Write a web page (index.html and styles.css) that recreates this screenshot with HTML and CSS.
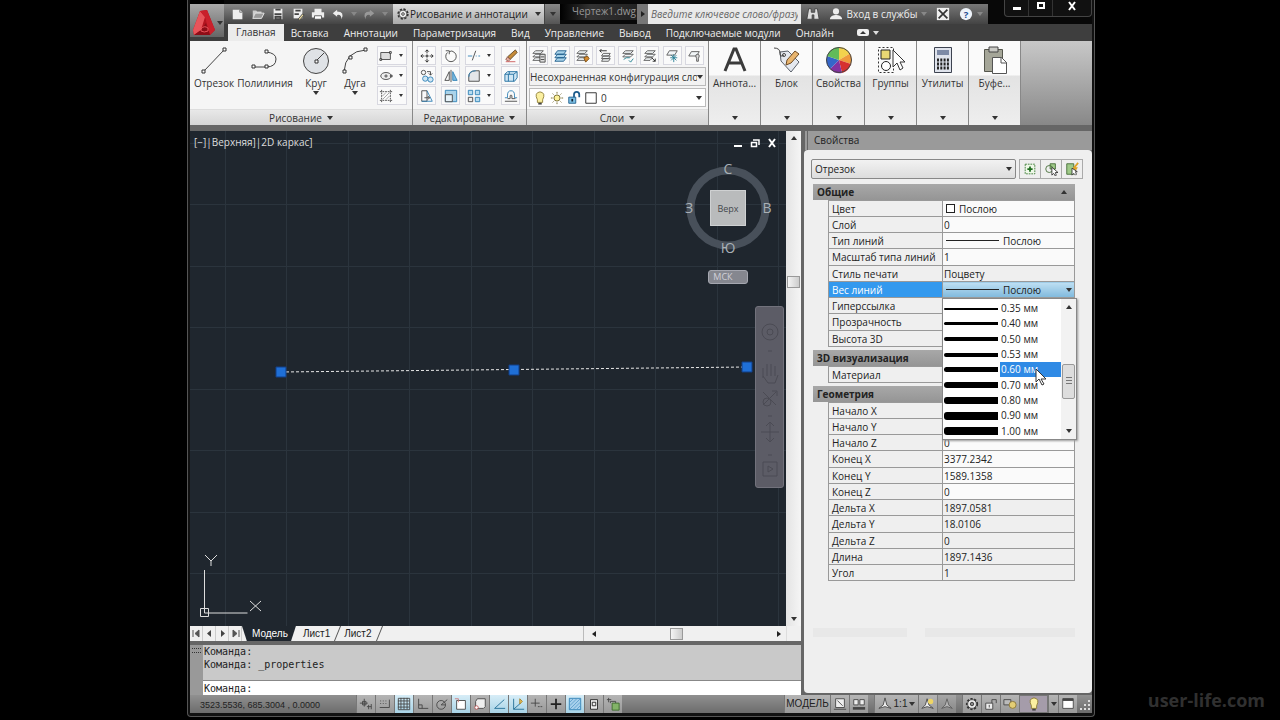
FILE: index.html
```html
<!DOCTYPE html>
<html lang="ru">

<head>
    <meta charset="UTF-8">
    <meta name="viewport" content="width=device-width, initial-scale=1.0">
    <title>Чертеж1.dwg</title>
    <link rel="stylesheet" href="styles.css">
</head>

<body>
    <div class="window">

        <header class="top">
            <button class="app-button" aria-label="Меню приложения">
                <svg width="24" height="28" viewBox="0 0 24 28">
                    <path d="M8 2L15 1L23 21L18 26L2 26L1 21Z" fill="#b3141f" />
                    <path d="M8 2L1 21L2 26L9 21L13 8Z" fill="#e8545a" />
                    <path d="M15 1L23 21L18 26L13 8L8 2Z" fill="#c9202b" />
                    <path d="M9 21L14 14L18 26L2 26Z" fill="#8d0d17" />
                    <path d="M9 20q3-4 7-1v3q-4 2-7 0z" fill="none" stroke="#e8545a" />
                </svg>
                <i class="arrow"></i>
            </button>
            <div class="top-rows">
                <div class="title-row">
                    <div class="quick">
                        <button aria-label="Создать"><svg class="ic" viewBox="0 0 16 16"><path d="M2 3h8l3 3v8H2z" fill="#eee" /><path d="M10 3v3h3" fill="none" stroke="#777" /></svg></button>
                        <button aria-label="Открыть"><svg class="ic" viewBox="0 0 16 16"><path d="M2 12V4h4l1 1h5v2H5z" fill="#ccc" /><path d="M5 7h10l-3 6H2z" fill="#999" stroke="#eee" /></svg></button>
                        <button aria-label="Сохранить"><svg class="ic" viewBox="0 0 16 16"><path d="M3 2h10v12H3z" fill="#eee" /><path d="M5 3h6M4 8h8M5 11h6v3H5z" stroke="#444" stroke-width="2" fill="#888" /></svg></button>
                        <button aria-label="Сохранить как"><svg class="ic" viewBox="0 0 16 16"><path d="M3 2h10v11H3z" fill="#eee" /><path d="M5 4h6M4 8h5" stroke="#444" stroke-width="2" /><path d="M8 14l5-6 2 1-5 6z" fill="#e8d9a0" stroke="#444" /></svg></button>
                        <button aria-label="Печать"><svg class="ic" viewBox="0 0 16 16"><path d="M4 2h8v4H4zM1 6h14v6H1z" fill="#eee" /><path d="M4 10h8v4H4z" fill="#fff" stroke="#555" /></svg></button>
                        <button aria-label="Отменить"><svg class="ic" viewBox="0 0 16 16"><path d="M7 3L2 7l5 4V9q5-1 5 5 4-9-5-9z" fill="#eee" /></svg></button>
                        <button class="thin" aria-label="Список отмены"><i class="arrow dim"></i></button>
                        <button aria-label="Повторить"><svg class="ic" viewBox="0 0 16 16"><path d="M9 3l5 4-5 4V9Q4 8 4 14 0 5 9 5z" fill="#999" /></svg></button>
                        <button class="thin" aria-label="Список повтора"><i class="arrow dim"></i></button>
                    </div>
                    <div class="workspace">
                        <svg class="ic" viewBox="0 0 16 16"><circle cx="8" cy="8" r="5.5" fill="none" stroke="#333" stroke-width="2" stroke-dasharray="2.5 1.8" /><circle cx="8" cy="8" r="4.5" fill="#eee" stroke="#444" /><circle cx="8" cy="8" r="1.5" fill="none" stroke="#333" /></svg>
                        <select aria-label="Рабочее пространство">
                            <option>Рисование и аннотации</option>
                        </select>
                        <i class="arrow"></i>
                    </div>
                    <button class="quick-more" aria-label="Настройка панели"><i class="arrow"></i></button>
                    <div class="doc-title">Чертеж1.dwg</div>
                    <button class="search-open" aria-label="Поиск"><i class="arrow-right"></i></button>
                    <input class="search" type="text" aria-label="Поиск" placeholder="Введите ключевое слово/фразу">
                    <div class="info">
                        <button aria-label="Найти"><svg class="ic" viewBox="0 0 16 16"><path d="M3 2h3v4h4V2h3l2 12H9V9H7v5H1z" fill="#ddd" stroke="#444" /></svg></button>
                        <button class="login"><svg class="ic" viewBox="0 0 16 16"><circle cx="8" cy="5" r="3.5" fill="#eee" /><path d="M1 14q0-4 6-5h2q6 1 6 5z" fill="#eee" /></svg>Вход в службы <i class="arrow dim"></i></button>
                        <button aria-label="Exchange"><svg class="ic" viewBox="0 0 16 16"><path d="M1 1h14v14H1z" fill="#eee" /><path d="M3 3l5 5 5-5M3 13l5-5 5 5" stroke="#333" stroke-width="2" fill="none" /></svg></button>
                        <button class="help" aria-label="Справка"><svg class="ic" viewBox="0 0 16 16"><circle cx="8" cy="8" r="7" fill="#eef3fa" /><text x="8" y="12" text-anchor="middle" font-size="11" font-weight="bold" fill="#1d4b8f">?</text></svg><i class="arrow dim"></i></button>
                    </div>
                    <div class="win-buttons">
                        <button aria-label="Свернуть"><svg width="10" height="10"><path d="M1 6h8v3H1z" fill="#fff" /></svg></button>
                        <button aria-label="Развернуть"><svg width="10" height="10"><path d="M2 2h6v5H2z" fill="none" stroke="#fff" stroke-width="2" /></svg></button>
                        <button class="close" aria-label="Закрыть"><svg width="10" height="10"><path d="M2 1l6 8M8 1L2 9" stroke="#fff" stroke-width="2" /></svg></button>
                    </div>
                </div>
                <nav class="tabs">
                    <a href="#" class="active">Главная</a>
                    <a href="#">Вставка</a>
                    <a href="#">Аннотации</a>
                    <a href="#">Параметризация</a>
                    <a href="#">Вид</a>
                    <a href="#">Управление</a>
                    <a href="#">Вывод</a>
                    <a href="#">Подключаемые модули</a>
                    <a href="#">Онлайн</a>
                    <button class="collapse" aria-label="Свернуть ленту"><svg width="12" height="7"><rect width="12" height="7" rx="2" fill="#eee" /><path d="M3 5h6L6 2z" fill="#333" /></svg><i class="arrow light"></i></button>
                </nav>
            </div>
        </header>

        <section class="ribbon">
            <div class="panel draw">
                <div class="panel-body">
                    <button class="big"><svg width="30" height="30" viewBox="0 0 30 30" class="ln"><path d="M5 25L25 4" /><path d="M3 24h3v3H3zM24 2h3v3h-3z" class="node" /></svg>Отрезок</button>
                    <button class="big wide"><svg width="30" height="30" viewBox="0 0 30 30" class="ln"><path d="M3 21h13q10 0 10-8 0-6-10-7" /><path d="M2 19h3v3H2zM15 19h3v3h-3zM15 4h3v3h-3z" class="node" /></svg>Полилиния</button>
                    <button class="big"><svg width="30" height="30" viewBox="0 0 30 30" class="ln"><circle cx="15" cy="15" r="12.5" fill="#dfe2e6" /><path d="M15 15l8-8" /><path d="M14 14h3v3h-3z" class="node" /></svg>Круг<i class="arrow"></i></button>
                    <button class="big slim"><svg width="30" height="30" viewBox="0 0 30 30" class="ln"><path d="M4 26Q5 5 26 4" /><path d="M3 24h3v3H3zM9 10h3v3H9zM24 2h3v3h-3z" class="node" /></svg>Дуга<i class="arrow"></i></button>
                    <div class="tools one">
                        <button class="tool split" aria-label="Прямоугольник"><svg class="ic ln" viewBox="0 0 16 16"><path d="M2 4h11v8H2z" fill="#ddd" /><path d="M1 11h2v2H1zM12 3h2v2h-2z" class="node" /></svg><i class="arrow"></i></button>
                        <button class="tool split" aria-label="Эллипс"><svg class="ic ln" viewBox="0 0 16 16"><ellipse cx="8" cy="8" rx="6" ry="4" fill="#eee" /><path d="M8 6v4M6 8h4M13 7h2v2h-2z" /></svg><i class="arrow"></i></button>
                        <button class="tool split" aria-label="Штриховка"><svg class="ic ln" viewBox="0 0 16 16"><path d="M3 1v14M13 1v14M1 3h14M1 13h14" stroke-dasharray="2 1" /><path d="M4 8l4-4M4 12l8-8M8 12l4-4" stroke="#999" /></svg><i class="arrow"></i></button>
                    </div>
                </div>
                <button class="panel-title">Рисование <i class="arrow"></i></button>
            </div>

            <div class="panel edit">
                <div class="panel-body">
                    <div class="tools three">
                        <button class="tool" aria-label="Перенести"><svg class="ic ln" viewBox="0 0 16 16"><path d="M8 1v4M8 11v4M1 8h4M11 8h4M6 3l2-2 2 2M6 13l2 2 2-2M3 6L1 8l2 2M13 6l2 2-2 2M7 7h2v2H7z" stroke="#222" /></svg></button>
                        <button class="tool" aria-label="Повернуть"><svg class="ic ln" viewBox="0 0 16 16"><path d="M4 4a6 6 0 1 0 8 0M2 2h4v4M6 3q3-2 6 1" /></svg></button>
                        <button class="tool split" aria-label="Обрезать"><svg class="ic ln" viewBox="0 0 16 16"><path d="M1 8h5M10 8h1M13 8h2" stroke="#2d7fb5" /><path d="M6 13l4-11" /></svg><i class="arrow"></i></button>
                        <button class="tool" aria-label="Стереть"><svg class="ic" viewBox="0 0 16 16"><path d="M13 1l2 3-8 8-3-3z" fill="#c58a38" stroke="#5d4524" /><path d="M4 9l3 3-2 2-3-2z" fill="#e7afa0" stroke="#8a5a50" /><path d="M2 14.500h11" stroke="#c55" /></svg></button>
                        <button class="tool" aria-label="Копировать"><svg class="ic ln" viewBox="0 0 16 16"><circle cx="4" cy="4" r="2.500" /><path d="M8 3h4v4M10 5l2 2 2-2" /><g stroke="#2d7fb5"><circle cx="6" cy="11" r="3" fill="#cfe6f4" /><circle cx="12" cy="12" r="3" fill="#cfe6f4" /></g></svg></button>
                        <button class="tool" aria-label="Зеркало"><svg class="ic ln" viewBox="0 0 16 16"><path d="M6 3v10H1z" /><path d="M8 1v14" /><path d="M10 3v10h5z" fill="#7ebbe0" stroke="#2d7fb5" /></svg></button>
                        <button class="tool split" aria-label="Сопряжение"><svg class="ic ln" viewBox="0 0 16 16"><path d="M2 14V9q0-7 8-7h4v12z" fill="#e3e6ea" /><path d="M2 9q0-7 8-7" stroke="#2d7fb5" /></svg><i class="arrow"></i></button>
                        <button class="tool" aria-label="Расчленить"><svg class="ic" viewBox="0 0 16 16"><path d="M1 6l3-3h11v7l-3 4H1z" fill="#cfe6f4" stroke="#1d6c9f" /><path d="M1 6h10v8M11 6l4-3M5 6v8M6 3v3" stroke="#1d6c9f" fill="none" /></svg></button>
                        <button class="tool" aria-label="Растянуть"><svg class="ic ln" viewBox="0 0 16 16"><path d="M2 2h6v12H2z" /><path d="M8 2l6 12H2" stroke="#2d7fb5" /><path d="M5 10h6M9 8l2 2-2 2" /></svg></button>
                        <button class="tool" aria-label="Масштаб"><svg class="ic" viewBox="0 0 16 16"><path d="M1.500 1.500h13v13h-13z" fill="#a9d3ea" stroke="#2d7fb5" /><path d="M1.500 6.500h8v8h-8z" fill="#e6f3fa" stroke="#444" /></svg></button>
                        <button class="tool split" aria-label="Массив"><svg class="ic" viewBox="0 0 16 16"><path d="M1.500 1.500h5v5h-5zM9.500 1.500h5v5h-5zM9.500 9.500h5v5h-5z" fill="#b8dcef" stroke="#2d7fb5" /><path d="M1.500 9.500h5v5h-5z" fill="#eee" stroke="#444" /></svg><i class="arrow"></i></button>
                        <button class="tool" aria-label="Подобие"><svg class="ic ln" viewBox="0 0 16 16"><path d="M1 10h3V7q0-5 4-5t4 5v3h3" stroke="#2d7fb5" /><path d="M1 14h14M4 11h3V8q0-1 1-1t1 1v3h4" /></svg></button>
                    </div>
                </div>
                <button class="panel-title">Редактирование <i class="arrow"></i></button>
            </div>

            <div class="panel layers">
                <div class="panel-body stack">
                    <div class="layer-tools">
                        <button class="tool" aria-label="Свойства слоя"><svg class="ic lay" viewBox="0 0 16 16"><path d="M4 2h9l-3 3H1zM4 6h9l-3 3H1zM4 10h9l-3 3H1z" /><path d="M9 6h6v9H9z" fill="#ddd" stroke="#444" /><path d="M10 9h4M10 12h4" stroke="#444" /></svg></button>
                        <button class="tool" aria-label="Сделать текущим"><svg class="ic lay" viewBox="0 0 16 16"><path d="M4 2h10l-3 4H1zM4 6h10l-3 4H1zM4 10h10l-3 4H1z" fill="#a9d3ea" stroke="#1d5c8c" /></svg></button>
                        <button class="tool" aria-label="Соответствие слоя"><svg class="ic lay" viewBox="0 0 16 16"><path d="M4 2h9l-3 3H1zM4 6h9l-3 3H1zM4 10h9l-3 3H1z" /><path d="M9 10l4-2 2 3-4 4z" fill="#d58b2f" stroke="#754a12" /></svg></button>
                        <button class="tool" aria-label="Предыдущий слой"><svg class="ic lay" viewBox="0 0 16 16"><path d="M6 5h8l-2 3H4zM6 8h8l-2 3H4zM6 11h8l-2 3H4z" /><path d="M10 2H2M4 0L2 2l2 2" stroke="#222" /></svg></button>
                        <button class="tool" aria-label="Изолировать слой"><svg class="ic lay" viewBox="0 0 16 16"><path d="M5 2h9l-3 3H2zM5 6h9l-3 3H2z" /><path d="M3 12l3-2h4M9 13l2 2 3-4" stroke="#1d7d8c" /></svg></button>
                        <button class="tool" aria-label="Отменить изоляцию"><svg class="ic lay" viewBox="0 0 16 16"><path d="M5 2h9l-3 3H2zM5 6h9l-3 3H2zM4 10h7l-3 3H1z" /><path d="M10 10l4 4M14 11v3h-3" stroke="#222" /></svg></button>
                        <button class="tool" aria-label="Заморозить слой"><svg class="ic lay" viewBox="0 0 16 16"><path d="M5 2h9l-3 5H2z" /><path d="M10 6v9M6 10h8M7 7l6 6M13 7l-6 6" stroke="#277f95" /></svg></button>
                        <button class="tool" aria-label="Отключить слой"><svg class="ic lay" viewBox="0 0 16 16"><path d="M5 3h9l-3 5H2z" /><path d="M10 8a2 2 0 0 1 4 0l-1 3v3h-2v-3z" fill="#ddd" stroke="#555" /></svg></button>
                    </div>
                    <div class="combo config">
                        <select aria-label="Конфигурация слоев">
                            <option>Несохраненная конфигурация сло</option>
                        </select>
                        <i class="arrow"></i>
                    </div>
                    <div class="combo layer">
                        <svg class="ic" viewBox="0 0 16 16"><path d="M5 10Q1 2 8 1q7 1 3 9v3H5z" fill="#fbf0a1" stroke="#8c7a30" /><path d="M6 14.500h4" stroke="#444" stroke-width="2" /></svg>
                        <svg class="ic" viewBox="0 0 16 16"><circle cx="8" cy="8" r="3.500" fill="#fdf29a" stroke="#6b6022" /><path d="M8 1v2M8 13v2M1 8h2M13 8h2M3 3l1 1M12 12l1 1M13 3l-1 1M4 12l-1 1" stroke="#6b6022" /></svg>
                        <svg class="ic" viewBox="0 0 16 16"><path d="M2 7h8v7H2z" fill="#7fc2e6" stroke="#1d5c8c" /><path d="M8 7V4q0-3 3-3t3 3v3" fill="none" stroke="#1d5c8c" stroke-width="2" /><path d="M6 9v3" stroke="#123" stroke-width="2" /></svg>
                        <svg class="ic" viewBox="0 0 16 16"><path d="M2 2h12v12H2z" fill="#fff" stroke="#222" /></svg>
                        <select aria-label="Текущий слой">
                            <option>0</option>
                        </select>
                        <i class="arrow"></i>
                    </div>
                </div>
                <button class="panel-title">Слои <i class="arrow"></i></button>
            </div>

            <button class="mini"><svg width="30" height="30" viewBox="0 0 30 30"><path d="M5 26L14 4h2l9 22M9 18h12" fill="none" stroke="#3b3b3b" stroke-width="3" /></svg><span>Аннота...</span><i class="arrow"></i></button>
            <button class="mini"><svg width="30" height="30" viewBox="0 0 30 30"><path d="M8 7l8-1 11 11-8 10L9 16z" fill="#e4e8ef" stroke="#5a6069" /><circle cx="12" cy="10" r="1.500" fill="#fff" stroke="#444" /><path d="M2 3q6 0 6 5t4 2" fill="none" stroke="#444" /><path d="M15 15l8-9 4 3-8 9-5 2z" fill="#e9b56e" stroke="#6d4b25" /></svg><span>Блок</span><i class="arrow"></i></button>
            <button class="mini"><svg width="30" height="30" viewBox="0 0 30 30"><path d="M15 15V2A13 13 0 0 1 26 8.500z" fill="#f2d24d" /><path d="M15 15L26 8.500A13 13 0 0 1 27 19z" fill="#ee9a3c" /><path d="M15 15l12 4a13 13 0 0 1-9 9z" fill="#d63030" /><path d="M15 15l3 13a13 13 0 0 1-12-4z" fill="#8432a0" /><path d="M15 15l-9 9a13 13 0 0 1-3-13z" fill="#3566c9" /><path d="M15 15L3 11A13 13 0 0 1 15 2z" fill="#62bb59" /><circle cx="15" cy="15" r="12.500" fill="none" stroke="#444" /></svg><span>Свойства</span><i class="arrow"></i></button>
            <button class="mini"><svg width="30" height="30" viewBox="0 0 30 30"><path d="M2.500 2.500h15v25h-15z" fill="none" stroke="#333" stroke-dasharray="2 2" /><path d="M5 5h9v9H5z" fill="#e9d873" stroke="#222" /><circle cx="10" cy="21" r="4.500" fill="#fff" stroke="#222" /><path d="M17 5v17l4-4 3 7 3-2-3-6h5z" fill="#fff" stroke="#333" /></svg><span>Группы</span><i class="arrow"></i></button>
            <button class="mini"><svg width="30" height="30" viewBox="0 0 30 30"><path d="M6.500 2.500h17v25h-17z" fill="#dfe3ec" stroke="#3d4350" stroke-width="1" /><path d="M9 5h12v5H9z" fill="#7d8aa6" /><path d="M9 15h12M9 19h12M9 23h12" stroke="#222" stroke-width="3" stroke-dasharray="2 1.300" /></svg><span>Утилиты</span><i class="arrow"></i></button>
            <button class="mini"><svg width="30" height="30" viewBox="0 0 30 30"><path d="M4.500 4.500h18v22h-18z" fill="#a5a698" stroke="#55564c" /><path d="M9 2h9v5H9z" fill="#c9c9c4" stroke="#444" /><path d="M12.500 12.500h9l5 5v11h-14z" fill="#fff" stroke="#555" /><path d="M21 12v6h6" fill="none" stroke="#555" /></svg><span>Буфе...</span><i class="arrow"></i></button>
            <div class="ribbon-rest"></div>
        </section>

        <main class="work">
            <div class="left">
                <div class="view">
                    <div class="canvas">
                        <div class="view-label">[−]|Верхняя]|2D каркас]</div>
                        <svg class="drawing" width="596" height="495">
                            <path d="M91 241L557 236" stroke="#e8e8e8" stroke-dasharray="3 2" />
                            <path d="M86 236h10v10H86zM319 234h10v10h-10zM552 231h10v10h-10z" fill="#1f6fd6" stroke="#123f86" />
                            <path d="M14.500 439v43h43M10.500 477.500h8v8h-8z" fill="none" stroke="#ddd" />
                            <path d="M15 424l6 6 6-6M21 430v5M60 470l11 10M71 470l-11 10" fill="none" stroke="#ddd" />
                        </svg>
                        <div class="doc-buttons">
                            <button aria-label="Свернуть"><svg width="10" height="10"><path d="M1 7h8v2H1z" fill="#fff" /></svg></button>
                            <button aria-label="Восстановить"><svg width="10" height="10"><path d="M1.500 4.500h5v4h-5zM3 2h6v5" fill="none" stroke="#fff" stroke-width="1.500" /></svg></button>
                            <button aria-label="Закрыть"><svg width="10" height="10"><path d="M2 1l6 8M8 1L2 9" stroke="#fff" stroke-width="2" /></svg></button>
                        </div>
                        <div class="compass">
                            <svg width="90" height="92" viewBox="0 0 90 92">
                                <circle cx="45" cy="46" r="37.500" fill="none" stroke="#48505a" stroke-width="8" />
                                <path d="M27 28h36v36H27z" fill="#b9bbbc" />
                                <path d="M27.500 28.500h35v35h-35z" fill="none" stroke="#cfd1d2" />
                                <g text-anchor="middle" fill="#a9b0b6" font-size="14">
                                    <text x="45" y="12">С</text>
                                    <text x="84" y="51">В</text>
                                    <text x="45" y="91">Ю</text>
                                    <text x="6" y="51">З</text>
                                </g>
                                <text x="45" y="50" text-anchor="middle" fill="#44484c" font-size="9">Верх</text>
                            </svg>
                            <button class="ucs">МСК</button>
                        </div>
                        <div class="navbar">
                            <svg width="22" height="170" viewBox="0 0 22 170" fill="none" stroke="#4b4b54">
                                <circle cx="11" cy="20" r="8" /><circle cx="11" cy="20" r="3" />
                                <path d="M9 39h4" />
                                <path d="M4 66V56M8 64V52M12 64V52M16 64V54M4 64l5 7h7l3-8" />
                                <path d="M4 80l13 13M17 80L4 93M13 79h5v5M9 104h4" />
                                <circle cx="8" cy="90" r="4" />
                                <path d="M11 111v18M2 120h18M7 114l4-4 4 4M7 126l4 4 4-4M9 143h4" />
                                <path d="M4 150h14v14H4zM9 154l5 3-5 3z" />
                            </svg>
                        </div>
                    </div>
                    <div class="vscroll"><i class="arrow-up"></i><b></b><i class="arrow"></i></div>
                </div>
                <div class="sheets">
                    <div class="sheet-nav">
                        <button aria-label="Первый"><svg width="9" height="9"><path d="M1 1v7M7 1L3 4.500 7 8z" stroke="#555" fill="#555" /></svg></button>
                        <button aria-label="Назад"><svg width="9" height="9"><path d="M6 1L2 4.500 6 8z" fill="#444" /></svg></button>
                        <button aria-label="Вперед"><svg width="9" height="9"><path d="M3 1l4 3.500L3 8z" fill="#444" /></svg></button>
                        <button aria-label="Последний"><svg width="9" height="9"><path d="M8 1v7M2 1l4 3.500L2 8z" stroke="#555" fill="#555" /></svg></button>
                    </div>
                    <a href="#" class="sheet current">Модель</a>
                    <a href="#" class="sheet">Лист1</a>
                    <a href="#" class="sheet">Лист2</a>
                    <div class="hscroll"><i class="arrow-left"></i><b></b><i class="arrow-right"></i></div>
                    <div class="corner"></div>
                </div>
                <div class="command">
                    <div class="command-grip"></div>
                    <div class="command-text">
                        <div class="log">Команда:<br>Команда: _properties</div>
                        <div class="prompt">
                            <label for="cmd">Команда:</label>
                            <input id="cmd" type="text">
                        </div>
                    </div>
                </div>
            </div>

            <aside class="palette">
                <h2>Свойства</h2>
                <div class="palette-body">
                    <div class="object-row">
                        <div class="combo object">
                            <select aria-label="Тип объекта">
                                <option>Отрезок</option>
                            </select>
                            <i class="arrow"></i>
                        </div>
                        <button aria-label="Переключение PICKADD"><svg class="ic" viewBox="0 0 16 16"><path d="M2.500 2.500h11v11h-11z" fill="#eef8e8" stroke="#3a7a35" stroke-dasharray="2 1" /><path d="M8 5v6M5 8h6" stroke="#1c6b1c" stroke-width="2" /></svg></button>
                        <button aria-label="Выбрать объекты"><svg class="ic" viewBox="0 0 16 16"><path d="M7 2h6v6H7z" fill="#9fca88" stroke="#446b36" /><circle cx="6" cy="8" r="4" fill="none" stroke="#446b36" /><path d="M9 6v9l2-2 2 3 1-1-1-3h3z" fill="#fff" stroke="#333" /></svg></button>
                        <button aria-label="Быстрый выбор"><svg class="ic" viewBox="0 0 16 16"><path d="M2 2h8v12H2z" fill="#9fca88" stroke="#446b36" /><path d="M15 1l-5 6h3l-3 5" fill="none" stroke="#e0a326" stroke-width="2" /><path d="M8 7v8l2-2 2 2 1-1-1-3h2z" fill="#fff" stroke="#333" /></svg></button>
                    </div>

                    <h3>Общие <i class="arrow-up"></i></h3>
                    <table class="props">
                        <tr>
                            <th><label for="p-color">Цвет</label></th>
                            <td class="edit"><div class="cell"><i class="swatch"></i><input id="p-color" value="Послою"></div></td>
                        </tr>
                        <tr>
                            <th><label for="p-layer">Слой</label></th>
                            <td class="edit"><input id="p-layer" value="0"></td>
                        </tr>
                        <tr>
                            <th><label for="p-type">Тип линий</label></th>
                            <td class="edit"><div class="cell"><i class="line"></i><input id="p-type" value="Послою"></div></td>
                        </tr>
                        <tr>
                            <th><label for="p-scale">Масштаб типа линий</label></th>
                            <td class="edit"><input id="p-scale" value="1"></td>
                        </tr>
                        <tr>
                            <th><label for="p-plot">Стиль печати</label></th>
                            <td><input id="p-plot" value="Поцвету" readonly></td>
                        </tr>
                        <tr class="selected">
                            <th><label for="p-weight">Вес линий</label></th>
                            <td>
                                <div class="cell">
                                    <i class="line"></i>
                                    <select id="p-weight">
                                        <option>Послою</option>
                                    </select>
                                    <i class="arrow"></i>
                                </div>
                                <div class="popup">
                                    <ul role="listbox" aria-label="Вес линий">
                                        <li role="option"><i class="w w2"></i><span>0.35 мм</span></li>
                                        <li role="option"><i class="w w3"></i><span>0.40 мм</span></li>
                                        <li role="option"><i class="w w4"></i><span>0.50 мм</span></li>
                                        <li role="option"><i class="w w4"></i><span>0.53 мм</span></li>
                                        <li role="option" class="hover" aria-selected="true"><i class="w w5"></i><span>0.60 мм</span>
                                            <svg class="cursor" width="12" height="18" viewBox="0 0 12 18"><path d="M1 1v13l3-3 3 6 2-1-3-5h5z" fill="#fff" stroke="#333" /></svg>
                                        </li>
                                        <li role="option"><i class="w w6"></i><span>0.70 мм</span></li>
                                        <li role="option"><i class="w w7"></i><span>0.80 мм</span></li>
                                        <li role="option"><i class="w w8"></i><span>0.90 мм</span></li>
                                        <li role="option"><i class="w w8"></i><span>1.00 мм</span></li>
                                    </ul>
                                    <div class="popup-scroll"><i class="arrow-up"></i><b></b><i class="arrow"></i></div>
                                </div>
                            </td>
                        </tr>
                        <tr>
                            <th><label for="p-link">Гиперссылка</label></th>
                            <td class="edit"><input id="p-link"></td>
                        </tr>
                        <tr>
                            <th><label for="p-alpha">Прозрачность</label></th>
                            <td class="edit"><input id="p-alpha"></td>
                        </tr>
                        <tr>
                            <th><label for="p-height">Высота 3D</label></th>
                            <td class="edit"><input id="p-height"></td>
                        </tr>
                    </table>

                    <h3>3D визуализация</h3>
                    <table class="props">
                        <tr>
                            <th><label for="p-material">Материал</label></th>
                            <td class="edit"><input id="p-material"></td>
                        </tr>
                    </table>

                    <h3>Геометрия</h3>
                    <table class="props">
                        <tr>
                            <th><label for="g-x1">Начало X</label></th>
                            <td class="edit"><input id="g-x1"></td>
                        </tr>
                        <tr>
                            <th><label for="g-y1">Начало Y</label></th>
                            <td class="edit"><input id="g-y1"></td>
                        </tr>
                        <tr>
                            <th><label for="g-z1">Начало Z</label></th>
                            <td class="edit"><input id="g-z1" value="0"></td>
                        </tr>
                        <tr>
                            <th><label for="g-x2">Конец X</label></th>
                            <td class="edit"><input id="g-x2" value="3377.2342"></td>
                        </tr>
                        <tr>
                            <th><label for="g-y2">Конец Y</label></th>
                            <td class="edit"><input id="g-y2" value="1589.1358"></td>
                        </tr>
                        <tr>
                            <th><label for="g-z2">Конец Z</label></th>
                            <td class="edit"><input id="g-z2" value="0"></td>
                        </tr>
                        <tr>
                            <th><label for="g-dx">Дельта X</label></th>
                            <td><input id="g-dx" value="1897.0581" readonly></td>
                        </tr>
                        <tr>
                            <th><label for="g-dy">Дельта Y</label></th>
                            <td><input id="g-dy" value="18.0106" readonly></td>
                        </tr>
                        <tr>
                            <th><label for="g-dz">Дельта Z</label></th>
                            <td><input id="g-dz" value="0" readonly></td>
                        </tr>
                        <tr>
                            <th><label for="g-len">Длина</label></th>
                            <td><input id="g-len" value="1897.1436" readonly></td>
                        </tr>
                        <tr>
                            <th><label for="g-angle">Угол</label></th>
                            <td><input id="g-angle" value="1" readonly></td>
                        </tr>
                    </table>
                    <div class="strips"><i></i><i></i></div>
                </div>
            </aside>
        </main>

        <footer class="status">
            <div class="coords">3523.5536, 685.3004 , 0.0000</div>
            <div class="modes">
                <button aria-label="Зависимости"><svg class="ic ln" viewBox="0 0 16 16"><path d="M1 7h9M6 2v9M4 5h4v4H4zM9 11h5M11 9v5M14 8v6" /></svg></button>
                <button aria-label="Шаг"><svg class="ic ln" viewBox="0 0 16 16"><path d="M3 4v1M6 4v1M9 4v1M3 7v1M6 7v1M9 7v1M2 12h11V3" /></svg></button>
                <button class="on" aria-label="Сетка"><svg class="ic ln" viewBox="0 0 16 16"><path d="M1.500 1.500h13v13h-13zM4.500 1v13M8 1v13M11.500 1v13M1 4.500h13M1 8h13M1 11.500h13" /></svg></button>
                <button aria-label="Орто"><svg class="ic ln" viewBox="0 0 16 16"><path d="M3 2v11h11M3 9h4v4" /></svg></button>
                <button aria-label="Отслеживание"><svg class="ic ln" viewBox="0 0 16 16"><circle cx="7" cy="9" r="5" /><path d="M7 9l7-6M7 9h5" /></svg></button>
                <button class="on" aria-label="Привязка"><svg class="ic ln" viewBox="0 0 16 16"><path d="M3 4h10v10H3z" fill="#fff" /><path d="M1 2h4v4" stroke="#c77" /></svg></button>
                <button aria-label="3D привязка"><svg class="ic ln" viewBox="0 0 16 16"><path d="M5 2h9v9l-2 2H3V5z" fill="#eee" /><circle cx="4" cy="12" r="2" fill="#fff" stroke="#b55" /></svg></button>
                <button class="on" aria-label="Объектное отслеживание"><svg class="ic ln" viewBox="0 0 16 16"><path d="M14 3L3 13h12" stroke="#1f6b94" /></svg></button>
                <button class="on" aria-label="ДПСК"><svg class="ic ln" viewBox="0 0 16 16"><path d="M3 2v12h12M3 14l8-7" stroke="#1f6b94" /><path d="M10 2l3 3-3 3z" fill="#e8bf55" stroke="#a5802d" /></svg></button>
                <button aria-label="Динамический ввод"><svg class="ic ln" viewBox="0 0 16 16"><path d="M1 7h10M6 2v9M9 11h2M12 11h2" /></svg></button>
                <button aria-label="Вес линий"><svg class="ic ln" viewBox="0 0 16 16"><path d="M2 8h12M8 2v12" stroke="#222" stroke-width="2" /></svg></button>
                <button class="on" aria-label="Прозрачность"><svg class="ic" viewBox="0 0 16 16"><path d="M1.500 1.500h13v13h-13z" fill="#a7d0ec" stroke="#2d7fb5" /><path d="M2 6l4-4M2 10l8-8M2 14L14 2M6 14l8-8M10 14l4-4" stroke="#5f9fcb" /></svg></button>
                <button aria-label="Быстрые свойства"><svg class="ic ln" viewBox="0 0 16 16"><path d="M4 3h8v11H4z" fill="#eee" stroke="#222" /><path d="M6 6h4v4H6z" stroke="#222" /></svg></button>
                <button aria-label="Циклический выбор"><svg class="ic ln" viewBox="0 0 16 16"><path d="M1 3h5M3 1v5M5 7V5h6v2" /><path d="M7 7h8v8H7z" fill="#83b368" stroke="#3c6a2a" /></svg></button>
            </div>
            <div class="status-right">
                <button class="model">МОДЕЛЬ</button>
                <button aria-label="Лист"><svg class="ic ln" viewBox="0 0 16 16"><path d="M3 2h10v10H3z" fill="#eee" /><path d="M5 4l6 6M1 14h14" /></svg></button>
                <button aria-label="Виды"><svg class="ic ln" viewBox="0 0 16 16"><path d="M2 3h5v6H2zM9 3h5v6H9z" fill="#eee" /><path d="M1 13h14" stroke-width="3" /></svg></button>
                <i class="gap"></i>
                <button class="scale"><svg class="ic ln" viewBox="0 0 16 16"><path d="M8 1l2 8 5 4-7-2-7 2 5-4z" fill="#eee" /></svg>1:1<i class="arrow"></i></button>
                <button aria-label="Видимость аннотаций"><svg class="ic ln" viewBox="0 0 16 16"><path d="M7 2l2 7 5 4-7-2-6 2 4-4z" fill="#eee" /><circle cx="11" cy="5" r="3" fill="#eed565" stroke="none" /></svg></button>
                <button class="faded" aria-label="Автомасштаб"><svg class="ic ln" viewBox="0 0 16 16"><path d="M8 2l2 7 4 4-6-2-6 2 4-4z" fill="#ddd" /></svg></button>
                <i class="gap"></i>
                <button aria-label="Рабочее пространство"><svg class="ic" viewBox="0 0 16 16"><circle cx="8" cy="8" r="6" fill="none" stroke="#333" stroke-width="2" stroke-dasharray="2.500 1.800" /><circle cx="8" cy="8" r="5" fill="#eee" stroke="#444" /><circle cx="8" cy="8" r="2" fill="#888" stroke="#333" /></svg></button>
                <button aria-label="Закрепление"><svg class="ic ln" viewBox="0 0 16 16"><path d="M2 7h8v7H2z" fill="#eee" /><path d="M9 7V3h5v4M6 9v3" /></svg></button>
                <button aria-label="Ускорение"><svg class="ic ln" viewBox="0 0 16 16"><path d="M1 3h8v6H1z" fill="#bbb" /><circle cx="11" cy="9" r="4" fill="#e3ce75" stroke="#887335" /></svg></button>
                <button class="bulb" aria-label="Изоляция объектов"><svg class="ic" viewBox="0 0 16 16"><path d="M5 10Q1 2 8 1q7 1 3 9v3H5z" fill="#fbf0a1" stroke="#8c7a30" /><path d="M6 14.500h4" stroke="#444" stroke-width="2" /></svg></button>
                <button class="thin" aria-label="Меню строки состояния"><i class="arrow"></i></button>
                <button aria-label="Очистить экран"><svg class="ic ln" viewBox="0 0 16 16"><path d="M2 2h12v11H2z" fill="#fff" /><path d="M2 3h12" stroke-width="3" /></svg></button>
                <svg class="grip" width="15" height="14" viewBox="0 0 15 14"><path d="M11 1h2v2h-2zM7 5h2v2H7zM11 5h2v2h-2zM3 9h2v2H3zM7 9h2v2H7zM11 9h2v2h-2z" fill="#ddd" /></svg>
            </div>
        </footer>
    </div>

    <div class="watermark">user-life.com</div>
</body>

</html>
```
FILE: styles.css
```css
* {
    box-sizing: border-box;
}

body {
    margin: 0;
    padding: 0 185px 0 187px;
    background: #000;
    color: #333;
    font-family: "Open Sans", "Noto Sans", sans-serif;
    font-size: 10px;
    line-height: 14px;
    overflow: hidden;
}

button,
input,
select {
    font: inherit;
    color: inherit;
    background: none;
    border: 0;
    border-radius: 0;
    padding: 0;
    margin: 0;
    min-width: 0;
    outline: none;
}

select {
    appearance: none;
    flex: 1;
    overflow: hidden;
}

button {
    display: flex;
    align-items: center;
    justify-content: center;
    flex: none;
}

a {
    color: inherit;
    text-decoration: none;
}

svg {
    display: block;
    flex: none;
    overflow: visible;
}

.ic {
    width: 14px;
    height: 14px;
}

.ln {
    fill: none;
    stroke: #444;
}

.ln .node {
    fill: #fff;
    stroke: #333;
}

.lay {
    fill: #f2f6f8;
    stroke: #555;
}

.arrow,
.arrow-up {
    flex: none;
    width: 0;
    height: 0;
    border: 3px solid transparent;
    border-top: 4px solid #333;
    border-bottom: 0;
}

.arrow-up {
    border-top: 0;
    border-bottom: 4px solid #333;
}

.arrow.dim {
    border-top-color: #888;
}

.arrow.light {
    border-top-color: #ddd;
}

.arrow-left,
.arrow-right {
    flex: none;
    width: 0;
    height: 0;
    border: 3px solid transparent;
    border-left: 4px solid #222;
    border-right: 0;
}

.arrow-left {
    border-left: 0;
    border-right: 4px solid #222;
}

.window {
    display: flex;
    flex-direction: column;
    height: calc(100vh - 3px);
    padding: 0 3px;
    background: #111;
    border: 1px solid #555;
    border-top: 0;
    border-radius: 0 0 4px 4px;
}

/* title bar and tabs */

.top {
    display: flex;
    height: 41px;
    margin: 0 -1px;
    background: #3e3e3e;
}

.app-button {
    width: 34px;
    height: 41px;
    padding-top: 4px;
    gap: 1px;
    background: linear-gradient(#000 4px, #aaa 4px, #666 37px, #3e3e3e 37px);
}

.top-rows {
    flex: 1;
    min-width: 0;
}

.title-row {
    display: flex;
    height: 24px;
    padding-top: 4px;
    background: #080808;
}

.quick {
    display: flex;
    align-items: center;
    width: 169px;
    padding-left: 4px;
    background: linear-gradient(#888, #444);
}

.quick button {
    width: 20px;
}

.quick button.thin {
    width: 11px;
}

.workspace {
    display: flex;
    align-items: center;
    width: 151px;
    padding: 0 3px;
    background: linear-gradient(#ddd, #aaa);
    color: #222;
}

.quick-more {
    width: 16px;
    background: linear-gradient(#888, #555);
    border-left: 1px solid #444;
}

.doc-title {
    flex: 1;
    margin-bottom: 4px;
    padding-left: 12px;
    line-height: 14px;
    white-space: nowrap;
    color: #999;
    background: linear-gradient(90deg, #000, #333 40%, #222);
}

.search-open {
    width: 11px;
    background: #777;
}

.search {
    width: 153px;
    padding: 0 3px;
    background: #e9e9e9;
    font-style: italic;
}

.search::placeholder {
    color: #666;
    opacity: 1;
}

.info {
    display: flex;
    align-items: center;
    justify-content: space-around;
    width: 187px;
    color: #eee;
    background: linear-gradient(#777, #444);
}

.login,
.help {
    gap: 4px;
}

.win-buttons {
    display: flex;
    height: 17px;
    margin: -4px 0 0 16px;
    border: 1px solid #444;
    border-top: 0;
    border-radius: 0 0 4px 4px;
    background: #111;
}

.win-buttons button {
    width: 24px;
    border-right: 1px solid #333;
    padding-bottom: 4px;
}

.win-buttons button.close {
    width: 38px;
    border: 0;
}

.tabs {
    display: flex;
    align-items: center;
    gap: 15px;
    height: 17px;
    padding-left: 4px;
    color: #eee;
    white-space: nowrap;
}

.tabs a.active {
    margin-right: -8px;
    padding: 1px 8px 2px;
    background: #ececec;
    color: #333;
}

.tabs .collapse {
    gap: 4px;
    margin-left: 8px;
}

/* ribbon */

.ribbon {
    display: flex;
    flex: none;
    height: 84px;
    margin: 0 -1px;
    background: #888;
    gap: 1px;
}

.panel {
    display: flex;
    flex-direction: column;
    background: #f5f5f5;
}

.panel.draw {
    width: 222px;
}

.panel.edit {
    width: 113px;
}

.panel.layers {
    width: 181px;
}

.panel-body {
    display: flex;
    flex: 1;
    padding: 5px 3px 0;
}

.panel-title {
    height: 16px;
    gap: 5px;
    background: linear-gradient(#e8e8e8, #d5d5d5);
    border-top: 1px solid #ddd;
}

.big {
    flex-direction: column;
    justify-content: flex-start;
    width: 42px;
    white-space: nowrap;
}

.big.wide {
    width: 60px;
}

.big.slim {
    width: 36px;
}

.big .arrow {
    margin-top: 1px;
}

.tools {
    display: grid;
    grid-auto-rows: 19px;
    gap: 1px 5px;
    align-content: start;
}

.tools.one {
    margin-left: 4px;
}

.tools.three {
    margin-left: 1px;
    grid-template-columns: 19px 19px 31px 19px;
}

.tool {
    width: 19px;
    height: 19px;
    border: 1px solid #d8d8e0;
    background: #fafafa;
}

.tool.split {
    width: 30px;
    justify-content: space-between;
    padding: 0 3px 0 1px;
}

.tool.split .arrow {
    border-width: 2px;
    border-top-width: 3px;
    border-bottom: 0;
}

.panel-body.stack {
    flex-direction: column;
    gap: 2px;
    padding: 5px 2px 0;
}

.layer-tools {
    display: flex;
    justify-content: space-between;
    padding-right: 2px;
}

.combo {
    display: flex;
    align-items: center;
    height: 19px;
    gap: 3px;
    padding: 0 3px 0 1px;
    border: 1px solid #bbb;
    background: #f2f2f2;
}

.combo.config {
    gap: 0;
    padding: 0 2px 0 0;
}

.combo.layer {
    background: #fff;
    padding-left: 3px;
}

.mini {
    flex-direction: column;
    justify-content: flex-start;
    width: 51px;
    padding: 4px 0;
    color: #333;
    background: linear-gradient(#fafafa 34px, #e3e3e3 35px, #eee);
}

.mini span {
    margin-top: 1px;
}

.mini .arrow {
    margin: auto 0 1px;
}

.ribbon-rest {
    flex: 1;
    background: linear-gradient(#c8c8c8, #888);
}

/* drawing area */

.work {
    display: flex;
    flex: 1;
    min-height: 0;
    gap: 3px;
    margin: 0 -1px;
    padding-top: 6px;
    background: #666;
}

.left {
    display: flex;
    flex: 1;
    flex-direction: column;
    min-width: 0;
}

.view {
    display: flex;
    flex: 1;
    min-height: 0;
}

/* two grid steps per tile, 61px and 62px */
.canvas {
    position: relative;
    flex: 1;
    overflow: hidden;
    background-color: #1f262e;
    background-image:
        linear-gradient(90deg, #2b343d 1px, transparent 1px 61px, #2b343d 61px 62px, transparent 62px),
        linear-gradient(#2b343d 1px, transparent 1px 61px, #2b343d 61px 62px, transparent 62px);
    background-size: 123px 123px;
    background-position: 35px 12px;
}

.view-label {
    padding: 4px;
    color: #ddd;
}

.drawing {
    position: absolute;
    left: 0;
    top: 0;
}

.doc-buttons {
    position: absolute;
    top: 7px;
    right: 9px;
    display: flex;
    gap: 7px;
}

.compass {
    position: absolute;
    top: 31px;
    right: 13px;
    display: flex;
    flex-direction: column;
    align-items: center;
    gap: 16px;
}

.ucs {
    width: 40px;
    height: 14px;
    padding-right: 10px;
    border: 1px solid #a5a7b0;
    border-radius: 3px;
    background: #85878f;
    color: #d0d0d8;
    font-size: 9px;
}

.navbar {
    position: absolute;
    top: 175px;
    right: 2px;
    display: flex;
    justify-content: center;
    width: 29px;
    padding: 5px 0;
    border: 1px solid #72727c;
    border-radius: 3px;
    background: #5c5c66;
}

.vscroll {
    display: flex;
    flex-direction: column;
    align-items: center;
    width: 15px;
    padding: 5px 0;
    background: linear-gradient(90deg, #e4e4e4, #f5f5f5);
}

.vscroll b,
.hscroll b {
    width: 13px;
    height: 12px;
    margin: 136px 0 auto;
    border: 1px solid #999;
    background: linear-gradient(90deg, #f4f4f4, #ccc);
}

.sheets {
    display: flex;
    height: 15px;
    background: #f0f0f0;
    font-family: "Liberation Sans", sans-serif;
}

.sheet-nav {
    display: flex;
}

.sheet-nav button {
    width: 13px;
    border-right: 1px solid #ccc;
}

.sheet {
    position: relative;
    padding: 1px 7px 0;
    color: #222;
}

.sheet::after {
    content: "";
    position: absolute;
    top: 0;
    right: -1px;
    height: 15px;
    border-right: 1px solid #555;
    transform: skewX(-22deg);
}

.sheet.current {
    padding: 1px 8px 0 10px;
    background: #1f262e;
    clip-path: polygon(0 0, 100% 0, 91% 100%, 9% 100%);
    color: #fff;
}

.hscroll {
    display: flex;
    align-items: center;
    width: 203px;
    margin-left: auto;
    padding: 0 5px 0 8px;
    border-left: 1px solid #bbb;
}

.hscroll b {
    margin: 0 auto 0 74px;
}

.corner {
    width: 15px;
    border-left: 1px solid #ddd;
}

.command {
    display: flex;
    height: 54px;
    border-top: 4px solid #666;
    background: #999;
    color: #222;
    font-family: "DejaVu Sans Mono", monospace;
    line-height: 13px;
}

.command-grip {
    width: 9px;
    height: 5px;
    margin: 3px 2px 0 2px;
    border-top: 1px dotted #333;
    border-bottom: 1px dotted #333;
}

.command-text {
    display: flex;
    flex: 1;
    flex-direction: column;
    background: #c9c9c9;
}

.log {
    flex: 1;
    padding: 0 1px;
}

.prompt {
    display: flex;
    height: 15px;
    padding: 1px 1px 0;
    border-top: 1px solid #888;
    background: #fff;
}

.prompt input {
    flex: 1;
}

/* properties palette */

.palette {
    width: 288px;
    margin-bottom: 2px;
}

.palette h2 {
    height: 19px;
    margin: 0;
    padding: 2px 0 0 6px;
    border-left: 4px double #666;
    background: #9a9a9a;
    color: #222;
    font-size: 10px;
    font-weight: normal;
}

.palette-body {
    display: flex;
    flex-direction: column;
    gap: 1px;
    height: calc(100% - 19px);
    padding: 9px 17px 0 9px;
    border-radius: 4px;
    background: #efefef;
    color: #222;
}

.object-row {
    display: flex;
    margin: 0 -8px 4px -2px;
    height: 20px;
}

.object-row button {
    width: 22px;
    margin-left: -1px;
    border: 1px solid #aaa;
}

.combo.object {
    flex: 1;
    height: 20px;
    margin-right: 4px;
    padding-left: 3px;
    border-color: #888;
    border-radius: 2px;
    background: linear-gradient(#f2f2f2, #ddd);
}

.palette h3 {
    display: flex;
    align-items: center;
    justify-content: space-between;
    height: 16px;
    margin: 0;
    padding: 0 8px 0 4px;
    background: linear-gradient(#a8a8a8, #959595);
    color: #222;
    font-size: 10px;
}

.props {
    width: calc(100% - 15px);
    margin: -1px 0 2px 15px;
    border-collapse: collapse;
    table-layout: fixed;
}

.props tr {
    height: 16px;
}

.props tr:nth-child(4n) {
    height: 17px;
}

.props th,
.props td {
    position: relative;
    height: inherit;
    padding: 0 0 0 3px;
    border: 1px solid #999;
    font-weight: normal;
    text-align: left;
    line-height: 14px;
    white-space: nowrap;
}

.props th {
    width: 114px;
}

.props td {
    padding-left: 1px;
}

.props td.edit {
    background: #fafafa;
}

.props input {
    display: block;
    width: 100%;
    height: 14px;
}

.cell {
    display: flex;
    align-items: center;
    gap: 4px;
    height: 14px;
    padding: 0 2px;
}

.swatch {
    flex: none;
    width: 9px;
    height: 9px;
    border: 1px solid #222;
    background: #fff;
}

.line {
    flex: none;
    width: 53px;
    border-top: 1px solid #222;
}

.props .selected th {
    background: #3399ee;
    color: #fff;
}

.props .selected td {
    background: linear-gradient(#bfe0f3, #7fb9dd);
}

.popup {
    position: absolute;
    z-index: 2;
    top: 100%;
    left: -1px;
    right: -3px;
    display: flex;
    height: 142px;
    margin-top: 1px;
    border: 1px solid #888;
    background: #fff;
    box-shadow: 1px 1px 2px #999;
}

.popup ul {
    display: flex;
    flex: 1;
    flex-direction: column;
    margin: 0;
    padding: 2px 0 0 1px;
    list-style: none;
}

.popup li {
    position: relative;
    display: flex;
    flex: 1;
    align-items: center;
    gap: 2px;
}

.popup li span {
    flex: 1;
    padding-left: 1px;
    line-height: 15px;
}

.popup li.hover span {
    background: #2f8ae5;
    color: #fff;
}

.w {
    width: 54px;
    height: 2px;
    border-radius: 3px 0 0 3px;
    background: #000;
}

.w3 {
    height: 3px;
}

.w4 {
    height: 4px;
}

.w5 {
    height: 5px;
}

.w6 {
    height: 6px;
}

.w7 {
    height: 7px;
}

.w8 {
    height: 8px;
}

.cursor {
    position: absolute;
    left: 91px;
    top: 6px;
    z-index: 3;
}

.popup-scroll {
    display: flex;
    flex-direction: column;
    align-items: center;
    justify-content: space-between;
    width: 15px;
    padding: 6px 0;
    background: #f2f2f2;
}

.popup-scroll b {
    width: 13px;
    height: 35px;
    margin-top: 24px;
    border: 1px solid #999;
    border-radius: 2px;
    background: repeating-linear-gradient(#777 0 1px, transparent 1px 3px) center / 6px 9px no-repeat, #ddd;
}

.strips {
    display: flex;
    gap: 18px;
    height: 9px;
    margin-top: 44px;
}

.strips i {
    flex: 5;
    background: #e8e8e8;
}

.strips i+i {
    flex: 8;
}

/* status bar */

.status {
    display: flex;
    flex: none;
    align-items: stretch;
    height: 18px;
    margin: 0 -1px 3px;
    background: linear-gradient(#909090, #6c6c6c);
    color: #222;
    font-family: "Liberation Sans", sans-serif;
}

.coords {
    width: 166px;
    padding: 3px 0 0 10px;
    font-size: 9px;
}

.modes,
.status-right {
    display: flex;
    align-items: stretch;
}

.status-right {
    margin-left: auto;
}

.modes button,
.status-right button {
    width: 19px;
    border-left: 1px solid #777;
    background: linear-gradient(#b5b5b5, #999);
}

.modes .on {
    background: linear-gradient(#d7edf7, #a8d3e6);
}

.status-right .model {
    width: 46px;
}

.status-right .scale {
    width: 44px;
    gap: 2px;
}

.status-right .bulb {
    width: 29px;
    background: #a59caa;
    border: 1px solid #777;
}

.status-right .thin {
    width: 10px;
}

.status-right .faded {
    opacity: .6;
}

.gap {
    width: 6px;
}

.grip {
    margin-top: 4px;
}

.watermark {
    position: absolute;
    right: 15px;
    bottom: 11px;
    color: #303030;
    font-size: 18px;
    font-weight: bold;
    line-height: 18px;
}
```
